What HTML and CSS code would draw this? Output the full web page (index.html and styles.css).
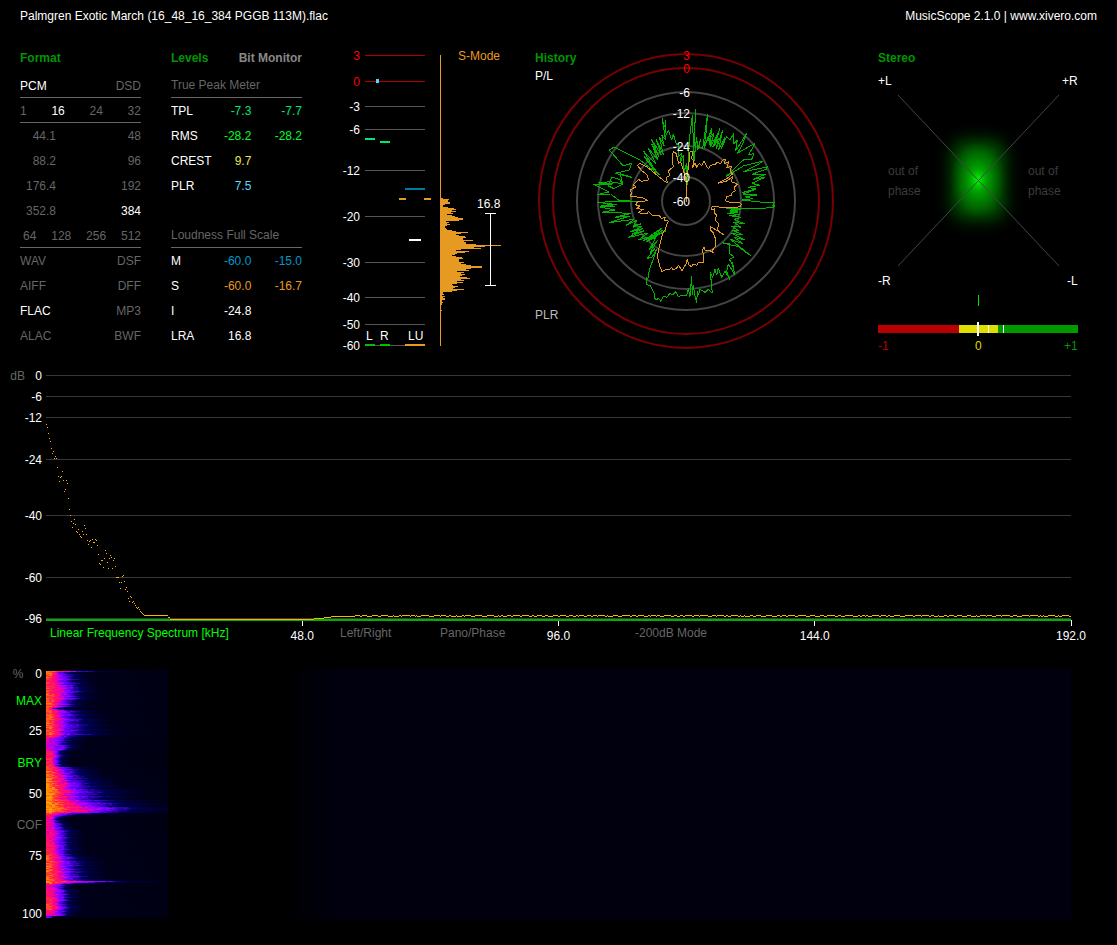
FILE: index.html
```html
<!DOCTYPE html>
<html lang="en">

<head>
    <meta charset="UTF-8">
    <meta name="viewport" content="width=device-width, initial-scale=1.0">
    <title>MusicScope 2.1.0</title>
    <link rel="stylesheet" href="styles.css">
</head>

<body>
    <header class="topbar">
        <span>Palmgren Exotic March (16_48_16_384 PGGB 113M).flac</span>
        <span>MusicScope 2.1.0 | <a href="#">www.xivero.com</a></span>
    </header>

    <main>
        <div class="panels">
            <section class="format">
                <h2>Format</h2>
                <div class="row line"><span class="on">PCM</span><span>DSD</span></div>
                <div class="row line"><span>1</span><span class="on">16</span><span>24</span><span>32</span></div>
                <div class="row"><span class="rate">44.1</span><span>48</span></div>
                <div class="row"><span class="rate">88.2</span><span>96</span></div>
                <div class="row"><span class="rate">176.4</span><span>192</span></div>
                <div class="row"><span class="rate">352.8</span><span class="on">384</span></div>
                <div class="row line dsd"><span>64</span><span>128</span><span>256</span><span>512</span></div>
                <div class="row"><span>WAV</span><span>DSF</span></div>
                <div class="row"><span>AIFF</span><span>DFF</span></div>
                <div class="row"><span class="on">FLAC</span><span>MP3</span></div>
                <div class="row"><span>ALAC</span><span>BWF</span></div>
            </section>

            <section class="levels">
                <div class="levels-head">
                    <h2>Levels</h2>
                    <button class="bit-monitor">Bit Monitor</button>
                </div>
                <table>
                    <thead>
                        <tr><th colspan="3">True Peak Meter</th></tr>
                    </thead>
                    <tbody>
                        <tr class="tpl"><th>TPL</th><td>-7.3</td><td>-7.7</td></tr>
                        <tr class="rms"><th>RMS</th><td>-28.2</td><td>-28.2</td></tr>
                        <tr class="crest"><th>CREST</th><td>9.7</td><td></td></tr>
                        <tr class="plr"><th>PLR</th><td>7.5</td><td></td></tr>
                    </tbody>
                </table>
                <table>
                    <thead>
                        <tr><th colspan="3">Loudness Full Scale</th></tr>
                    </thead>
                    <tbody>
                        <tr class="momentary"><th>M</th><td>-60.0</td><td>-15.0</td></tr>
                        <tr class="short"><th>S</th><td>-60.0</td><td>-16.7</td></tr>
                        <tr><th>I</th><td>-24.8</td><td></td></tr>
                        <tr><th>LRA</th><td>16.8</td><td></td></tr>
                    </tbody>
                </table>
            </section>

            <section class="meter">
                <button class="s-mode">S-Mode</button>
                <svg viewBox="0 0 173 304">
                    <g class="crisp">
                        <g fill="#b00000">
                            <rect x="33" y="7" width="60" height="1" />
                            <rect x="33" y="33" width="60" height="1" />
                        </g>
                        <g fill="#555">
                            <rect x="33" y="58" width="60" height="1" />
                            <rect x="33" y="81" width="60" height="1" />
                            <rect x="33" y="122" width="60" height="1" />
                            <rect x="33" y="168" width="60" height="1" />
                            <rect x="33" y="214" width="60" height="1" />
                            <rect x="33" y="249" width="60" height="1" />
                            <rect x="33" y="276" width="60" height="1" />
                            <rect x="33" y="297" width="60" height="1" />
                        </g>
                        <rect x="44" y="31" width="3" height="4" fill="#4dd8ff" />
                        <rect x="33" y="90" width="10" height="2" fill="#00e676" />
                        <rect x="48" y="93" width="10" height="2" fill="#00e676" />
                        <rect x="73" y="140" width="20" height="2" fill="#007a9e" />
                        <rect x="67" y="150" width="7" height="2" fill="#e69a22" />
                        <rect x="92" y="150" width="7" height="2" fill="#e69a22" />
                        <rect x="77" y="191" width="12" height="2" fill="#fff" />
                        <rect x="33" y="296" width="10" height="2" fill="#00c000" />
                        <rect x="48" y="296" width="10" height="2" fill="#00c000" />
                        <rect x="73" y="296" width="20" height="2" fill="#e69a22" />
                        <rect x="108" y="7" width="1" height="291" fill="#e69a22" />
                        <g id="histogram" fill="#e69a22"></g>
                        <path d="M153 165.500h11M158.500 165v73M153 237.500h11" stroke="#fff" />
                    </g>
                    <g class="end">
                        <text x="28" y="12" class="red">3</text>
                        <text x="28" y="38" class="red">0</text>
                        <text x="28" y="63">-3</text>
                        <text x="28" y="86">-6</text>
                        <text x="28" y="127">-12</text>
                        <text x="28" y="173">-20</text>
                        <text x="28" y="219">-30</text>
                        <text x="28" y="254">-40</text>
                        <text x="28" y="281">-50</text>
                        <text x="28" y="302">-60</text>
                    </g>
                    <text x="34" y="292">L</text>
                    <text x="48" y="292">R</text>
                    <text x="76" y="292">LU</text>
                    <text x="145" y="160">16.8</text>
                </svg>
            </section>

            <section class="history">
                <div class="history-head">
                    <h2>History</h2>
                    <button>P/L</button>
                </div>
                <button class="plr-button">PLR</button>
                <svg viewBox="0 0 313 304">
                    <g fill="none" stroke="#444" stroke-width="2">
                        <circle cx="151" cy="153" r="147" stroke="#700" />
                        <circle cx="151" cy="153" r="133" stroke="#700" />
                        <circle cx="151" cy="153" r="109" />
                        <circle cx="151" cy="153" r="88" />
                        <circle cx="151" cy="153" r="55" />
                        <circle cx="151" cy="153" r="24" />
                    </g>
                    <svg viewBox="15 24 939 912" width="313" height="304">
                        <g class="crisp" fill="none" stroke-width="3" stroke-linejoin="bevel">
                            <polyline id="peak-trace" stroke="#00b400" />
                            <polyline id="loudness-trace" stroke="#e69a22" />
                        </g>
                    </svg>
                    <g class="end">
                        <text x="155" y="12" class="red">3</text>
                        <text x="155" y="25" class="red">0</text>
                        <text x="155" y="49">-6</text>
                        <text x="155" y="70">-12</text>
                        <text x="155" y="103">-24</text>
                        <text x="155" y="134">-40</text>
                        <text x="155" y="158">-60</text>
                    </g>
                </svg>
            </section>

            <section class="stereo">
                <h2>Stereo</h2>
                <svg viewBox="0 0 219 279">
                    <defs>
                        <filter id="soft" x="-50%" y="-50%" width="200%" height="200%">
                            <feGaussianBlur stdDeviation="9" />
                        </filter>
                        <radialGradient id="core">
                            <stop offset="0" stop-color="#0f0" />
                            <stop offset="0.300" stop-color="#00d000" stop-opacity="0.600" />
                            <stop offset="1" stop-color="#008000" stop-opacity="0" />
                        </radialGradient>
                    </defs>
                    <rect x="75" y="69" width="51" height="76" rx="12" fill="#006000" filter="url(#soft)" />
                    <ellipse cx="100" cy="107" rx="28" ry="38" fill="url(#core)" />
                    <path d="M20 22L181 193M181 22L20 193" stroke="#444" />
                    <text x="0" y="12">+L</text>
                    <text x="184" y="12">+R</text>
                    <text x="0" y="212">-R</text>
                    <text x="189" y="212">-L</text>
                    <g class="phase">
                        <text x="10" y="102">out of</text>
                        <text x="10" y="122">phase</text>
                        <text x="150" y="102">out of</text>
                        <text x="150" y="122">phase</text>
                    </g>
                    <g class="crisp">
                        <rect x="100" y="222" width="1" height="11" fill="#00e600" />
                        <rect x="0" y="252" width="81" height="8" fill="#b80000" />
                        <rect x="81" y="252" width="39" height="8" fill="#dede00" />
                        <rect x="120" y="252" width="80" height="8" fill="#009a00" />
                        <rect x="99" y="249" width="2" height="14" fill="#fff" />
                        <rect x="110" y="252" width="1" height="8" fill="#fff" />
                        <rect x="125" y="252" width="1" height="8" fill="#fff" />
                    </g>
                    <text x="0" y="277" class="minus">-1</text>
                    <text x="97" y="277" class="zero">0</text>
                    <text x="186" y="277" class="plus">+1</text>
                </svg>
            </section>
        </div>

        <section class="spectrum">
            <svg class="spectrum-plot">
                <g class="crisp" fill="#383838">
                    <rect x="0" y="10" width="100%" height="1" />
                    <rect x="0" y="31" width="100%" height="1" />
                    <rect x="0" y="52" width="100%" height="1" />
                    <rect x="0" y="94" width="100%" height="1" />
                    <rect x="0" y="150" width="100%" height="1" />
                    <rect x="0" y="212" width="100%" height="1" />
                    <rect x="0" y="253" width="100%" height="1" />
                    <rect x="0" y="254" width="100%" height="2" fill="#00b000" />
                </g>
                <svg viewBox="0 0 1025 260" height="260" preserveAspectRatio="none">
                    <g id="spectrum-dots" class="crisp" fill="#ffb400"></g>
                </svg>
                <g class="end">
                    <text x="-21" y="15" class="dim">dB</text>
                    <text x="-4" y="15">0</text>
                    <text x="-4" y="36">-6</text>
                    <text x="-4" y="57">-12</text>
                    <text x="-4" y="99">-24</text>
                    <text x="-4" y="155">-40</text>
                    <text x="-4" y="217">-60</text>
                    <text x="-4" y="258">-96</text>
                </g>
                <g class="crisp" stroke="#fff">
                    <line x1="25%" x2="25%" y1="256" y2="261" />
                    <line x1="50%" x2="50%" y1="256" y2="261" />
                    <line x1="75%" x2="75%" y1="256" y2="261" />
                    <line x1="100%" x2="100%" y1="255" y2="261" />
                </g>
                <g class="middle">
                    <text x="25%" y="275">48.0</text>
                    <text x="50%" y="275">96.0</text>
                    <text x="75%" y="275">144.0</text>
                    <text x="100%" y="275">192.0</text>
                </g>
            </svg>
            <nav class="modes">
                <button class="active">Linear Frequency Spectrum [kHz]</button>
                <button>Left/Right</button>
                <button>Pano/Phase</button>
                <button>-200dB Mode</button>
            </nav>
        </section>

        <section class="spectrogram">
            <div class="percent">
                <span><span class="unit">%</span>0</span>
                <button class="active">MAX</button>
                <span>25</span>
                <button class="active">BRY</button>
                <span>50</span>
                <button>COF</button>
                <span>75</span>
                <span>100</span>
            </div>
            <canvas id="waterfall" width="1025" height="250"></canvas>
        </section>
    </main>

    <script src="script.js"></script>
</body>

</html>
```
FILE: styles.css
```css
* {
    box-sizing: border-box;
}

body {
    margin: 0;
    background-color: #000;
    color: #fff;
    font: 12px/14px "Liberation Sans", Arial, sans-serif;
}

h2 {
    margin: 0;
    font-size: 12px;
    line-height: 14px;
    color: #009600;
}

a {
    color: inherit;
    text-decoration: none;
}

button {
    padding: 0;
    border: none;
    background: none;
    color: #666;
    font: inherit;
    text-align: left;
    cursor: pointer;
}

svg {
    display: block;
    overflow: visible;
}

text {
    fill: #fff;
}

.crisp {
    shape-rendering: crispEdges;
}

.end {
    text-anchor: end;
}

.middle {
    text-anchor: middle;
}

.red {
    fill: #f00;
}

.dim {
    fill: #666;
}

.topbar {
    display: flex;
    justify-content: space-between;
    padding: 9px 20px 25px;
}

.panels {
    display: grid;
    grid-template-columns: 121fr 131fr 173fr 313fr 219fr;
    gap: 30px;
    padding: 0 20px;
}

.panels svg {
    width: 100%;
}

/* format */
.format,
.levels,
.stereo {
    padding-top: 3px;
}

.format h2,
.levels-head,
.stereo h2 {
    margin-bottom: 8px;
}

.row {
    display: flex;
    justify-content: space-between;
    height: 25px;
    line-height: 26px;
    color: #666;
}

.line {
    border-bottom: 1px solid #666;
}

.on {
    color: #fff;
}

.rate {
    width: 36px;
    text-align: right;
}

.dsd {
    padding-left: 3px;
}

/* levels */
.levels-head {
    display: flex;
    justify-content: space-between;
}

.bit-monitor {
    color: #888;
    font-weight: bold;
}

.levels table {
    width: 100%;
    table-layout: fixed;
    border-spacing: 0;
}

.levels table + table {
    margin-top: 25px;
}

.levels th,
.levels td {
    height: 25px;
    padding: 0;
    font-weight: normal;
    text-align: left;
    white-space: nowrap;
}

.levels td {
    text-align: right;
}

.levels td:nth-child(2) {
    padding-right: 7px;
}

.levels thead th {
    color: #666;
    border-bottom: 1px solid #666;
}

.levels tbody th {
    color: #fff;
}

.tpl {
    color: #00e676;
}

.rms {
    color: #00ff22;
}

.crest {
    color: #e6e650;
}

.plr {
    color: #5cd6ff;
}

.momentary {
    color: #0099cc;
}

.short {
    color: #e69a22;
}

/* loudness meter */
.meter,
.history {
    position: relative;
}

.s-mode {
    position: absolute;
    top: 1px;
    right: 5px;
    color: #e69a22;
}

/* history */
.history-head {
    position: absolute;
    top: 3px;
    left: 0;
}

.history-head button {
    margin-top: 4px;
    color: #fff;
}

.plr-button {
    position: absolute;
    bottom: 30px;
    left: 0;
    color: #bbb;
}

/* stereo */
.phase text {
    fill: #3c3c3c;
}

.minus {
    fill: #b80000;
}

.zero {
    fill: #dede00;
}

.plus {
    fill: #009a00;
}

/* spectrum */
.spectrum {
    display: grid;
    margin-top: 13px;
    padding: 0 46px;
}

.spectrum-plot,
.modes {
    grid-area: 1 / 1;
}

.spectrum-plot {
    width: 100%;
    height: 280px;
}

.modes {
    display: grid;
    grid-template-columns: 290fr 100fr 195fr 436fr;
    align-self: end;
    justify-items: start;
    padding: 0 0 5px 4px;
}

.active {
    color: #00ff00;
}

/* spectrogram */
.spectrogram {
    display: grid;
    grid-template-columns: 42px 1fr;
    gap: 4px;
    align-items: start;
    margin-top: 22px;
    padding-right: 46px;
}

.percent {
    display: grid;
    grid-template-rows: 27px 30px 32px 31px 31px 31px 58px 14px;
    align-items: start;
    justify-items: end;
}

.unit {
    margin-right: 12px;
    color: #666;
}

#waterfall {
    display: block;
    width: 100%;
    height: 250px;
    margin-top: 2px;
}
```
FILE: script.js
```js
const SVG_NS = "http://www.w3.org/2000/svg";

function addRect(parent, x, y, width) {
    let rect = document.createElementNS(SVG_NS, "rect");
    rect.setAttribute("x", x);
    rect.setAttribute("y", y);
    rect.setAttribute("width", width);
    rect.setAttribute("height", 1);
    parent.appendChild(rect);
}

// small seeded generator, keeps the plots the same on every load
let seed = 7;
function random() {
    seed = (seed * 1103515245 + 12345) % 2147483648;
    return seed / 2147483648;
}

// loudness histogram, one bar per row
const histogram = [
    2, 8, 7, 7, 9, 9, 4, 2, 2, 7, 13, 15, 11, 15, 10, 12, 6, 11, 14, 17, 22, 22, 18, 5, 8, 6, 9, 6, 4, 4,
    5, 6, 11, 15, 27, 20, 15, 18, 24, 25, 22, 22, 32, 23, 25, 25, 35, 60, 44, 33, 40, 20, 15, 28, 24, 16,
    14, 11, 15, 21, 22, 18, 18, 18, 23, 20, 25, 30, 41, 41, 30, 25, 28, 16, 23, 20, 24, 21, 19, 26, 29, 20,
    23, 16, 22, 16, 11, 12, 17, 14, 12, 23, 16, 11, 2, 2, 3, 1, 4, 2, 4, 4, 1, 1, 2, 1, 1, 0, 0, 0, 0, 0, 1
];
histogram.forEach((width, i) => {
    if (width > 0) addRect(document.getElementById("histogram"), 109, 150 + i, width);
});

// history traces
document.getElementById("peak-trace").setAttribute("points",
    "470,455 473,400 478,300 487,225 491,330 497,207 493,290 490,380 500,290 503,330 511,298 508,322 518,325 533,222 527,290 522,325 " +
    "535,288 540,315 545,265 533,303 552,280 541,320 561,286 548,322 570,265 553,318 565,295 559,328 578,270 566,330 585,292 574,326 " +
    "590,290 600,300 612,280 610,312 622,300 617,332 650,280 636,316 622,340 660,318 675,311 655,345 672,340 665,358 640,360 588,410 " +
    "640,378 700,363 680,376 640,395 715,380 708,388 665,403 708,402 670,418 705,412 665,430 690,436 655,442 678,447 636,458 672,450 " +
    "640,462 680,465 645,470 668,476 636,480 700,487 733,486 728,498 735,496 728,503 690,505 588,506 632,509 600,513 625,516 592,520 " +
    "630,524 598,527 634,532 612,538 645,552 610,546 634,562 603,558 628,572 606,570 640,585 604,580 645,600 612,592 640,612 600,597 " +
    "662,647 625,620 575,608 600,612 598,640 612,650 598,658 612,682 605,665 615,705 595,672 590,695 600,720 585,692 575,712 565,684 " +
    "560,705 555,688 548,712 541,697 547,760 535,747 525,757 510,748 505,765 502,752 500,790 493,758 490,735 487,765 485,708 480,770 " +
    "475,745 470,768 455,765 445,770 438,755 428,765 420,760 410,772 400,768 393,784 385,775 380,780 372,772 374,762 362,738 350,733 " +
    "348,710 353,720 358,690 380,628 366,652 352,655 374,626 360,637 383,600 358,628 378,592 348,605 400,570 345,600 408,572 350,605 " +
    "394,565 340,602 378,585 325,600 352,580 295,592 343,572 305,583 338,566 300,576 336,560 312,556 334,551 308,562 320,541 288,556 " +
    "312,538 236,548 300,528 255,532 304,520 215,517 255,510 210,501 255,500 225,496 250,492 212,498 262,494 200,487 272,484 330,484 " +
    "268,482 242,462 200,464 236,456 190,433 248,432 205,429 240,425 280,432 252,446 235,438 246,411 268,418 278,430 270,401 305,412 " +
    "255,400 298,390 305,370 280,378 238,330 252,321 330,360 345,372 388,405 350,358 372,390 343,350 368,378 340,333 378,372 355,325 " +
    "384,360 365,312 388,352 364,297 394,345 378,296 400,345 388,290 403,318 395,285 407,300 396,235 404,262 408,240 404,292 415,270 " +
    "425,300 430,283 440,315 447,310 444,350 455,340 450,370 460,345 462,395 470,370 470,455");

document.getElementById("loudness-trace").setAttribute("points",
    "470,485 470,420 478,360 480,336 488,335 485,355 491,362 488,384 495,368 500,382 508,370 515,376 522,364 530,380 536,386 541,376 " +
    "555,373 562,366 572,372 578,360 587,357 582,372 596,365 590,384 606,378 600,392 607,402 596,412 564,430 590,423 608,410 603,425 " +
    "622,432 612,442 616,452 604,460 606,466 590,470 586,482 600,487 625,486 634,492 632,500 605,503 546,500 544,510 555,506 552,518 " +
    "560,525 555,540 566,552 562,570 580,585 575,580 542,560 540,570 548,575 558,600 556,620 548,630 550,640 538,630 526,632 522,620 " +
    "518,630 521,655 520,668 505,668 500,676 490,672 484,680 476,674 472,658 468,672 460,684 456,692 446,676 440,684 430,690 424,682 " +
    "418,690 408,688 396,695 390,680 382,650 388,620 398,580 406,568 412,550 416,544 403,540 406,532 394,536 388,526 370,528 355,515 " +
    "350,522 325,518 340,508 318,506 330,498 316,494 322,486 353,482 340,474 300,468 305,460 300,450 318,440 310,435 325,418 335,424 " +
    "355,420 352,405 335,392 322,376 330,370 350,380 405,425 412,428 408,412 418,408 416,392 430,380 426,355 430,335 438,340 446,370 " +
    "452,366 460,390 468,420 470,485");

// average spectrum, starts at 0 kHz
const spectrum = [
    424, 427, 433, 438, 441, 448, 453, 451, 458, 456, 458, 467, 476, 481, 477, 476, 471, 480, 491, 489, 480,
    483, 498, 509, 515, 521, 527, 523, 519, 524, 531, 532, 529, 534, 536, 537, 531, 534, 525, 528, 534, 540,
    544, 541, 540, 547, 539, 542, 542, 539, 540, 545, 554, 563, 564, 560, 560, 567, 558, 550, 553, 562, 568,
    558, 555, 557, 568, 560, 558, 566, 577, 577, 577, 582, 588, 582, 576, 575, 581, 589, 587, 591, 598, 601,
    596, 597, 602, 601, 603, 605, 607, 608, 607, 609, 611, 612, 613, 614
];
const dots = document.getElementById("spectrum-dots");
spectrum.forEach((y, i) => addRect(dots, i, y - 365, 1));
addRect(dots, 98, 250, 24);
addRect(dots, 122, 252, 2);
addRect(dots, 124, 254, 144);
addRect(dots, 268, 253, 10);
addRect(dots, 278, 252, 7);
addRect(dots, 285, 251, 24);
for (let x = 309; x < 1025;) {
    let high = 1 + Math.floor(random() * 8);
    let low = 1 + Math.floor(random() * 5);
    addRect(dots, x, 250, Math.min(high, 1025 - x));
    x += high;
    if (x < 1025) addRect(dots, x, 251, Math.min(low, 1025 - x));
    x += low;
}

// spectrogram: [row, level at 0 kHz, end of purple, end of blue]
const keys = [
    [2, 1, 34, 64], [3, 0.95, 14, 30], [10, 0.8, 20, 32], [25, 0.85, 24, 36], [37, 0.9, 18, 30],
    [39, 0.78, 6, 14], [42, 0.9, 20, 38], [55, 0.88, 20, 42], [65, 0.92, 22, 50], [67, 0.8, 16, 32],
    [69, 0.62, 12, 24], [80, 0.6, 16, 24], [83, 0.75, 11, 17], [97, 0.85, 10, 16], [98, 0.9, 18, 34],
    [110, 0.95, 24, 44], [120, 0.98, 30, 56], [130, 1, 34, 68], [138, 1, 58, 86], [142, 1, 64, 95],
    [144, 0.85, 22, 50], [146, 0.75, 12, 24], [150, 0.68, 7, 12], [160, 0.68, 14, 24], [185, 0.82, 16, 28],
    [188, 0.88, 18, 32], [200, 0.9, 22, 38], [211, 0.92, 24, 42], [212, 0.95, 54, 76], [214, 0.88, 22, 32],
    [216, 0.68, 12, 20], [225, 0.7, 18, 25], [238, 0.9, 14, 24], [246, 0.68, 14, 20], [247, 0.4, 2, 8]
];
const palette = [
    [0, 0, 0, 12], [0.2, 0, 0, 100], [0.4, 100, 0, 255], [0.52, 160, 0, 255],
    [0.65, 255, 0, 140], [0.8, 255, 30, 80], [0.9, 255, 100, 20], [1, 255, 160, 0]
];

function interpolate(table, pos) {
    if (pos <= table[0][0]) return table[0].slice(1);
    for (let i = 1; i < table.length; i++) {
        if (pos <= table[i][0]) {
            let a = table[i - 1];
            let b = table[i];
            let t = (pos - a[0]) / (b[0] - a[0]);
            return a.slice(1).map((v, n) => v + (b[n + 1] - v) * t);
        }
    }
    return table[table.length - 1].slice(1);
}

const canvas = document.getElementById("waterfall");
const ctx = canvas.getContext("2d");
ctx.fillStyle = "#00000c";
ctx.fillRect(0, 0, 122, 250);
let fade = ctx.createLinearGradient(235, 0, 290, 0);
fade.addColorStop(0, "#000");
fade.addColorStop(1, "#00000e");
ctx.fillStyle = fade;
ctx.fillRect(235, 0, 790, 250);

for (let y = 2; y < 249; y++) {
    let [start, purple, blue] = interpolate(keys, y);
    let stretch = 0.85 + random() * 0.3;
    purple *= stretch;
    blue *= stretch;
    let noise = 0;
    for (let x = 0; x < 122; x++) {
        if (x % 3 == 0) noise = (random() - 0.5) * 0.16;
        let level = interpolate([[0, start], [5, start * 0.95], [purple, 0.4], [blue, 0.13], [blue * 1.5, 0.03], [200, 0]], x)[0];
        level += noise * Math.min(1, level * 2);
        let [r, g, b] = interpolate(palette, Math.max(0, level));
        ctx.fillStyle = `rgb(${r}, ${g}, ${b})`;
        ctx.fillRect(x, y, 1, 1);
    }
}
```
